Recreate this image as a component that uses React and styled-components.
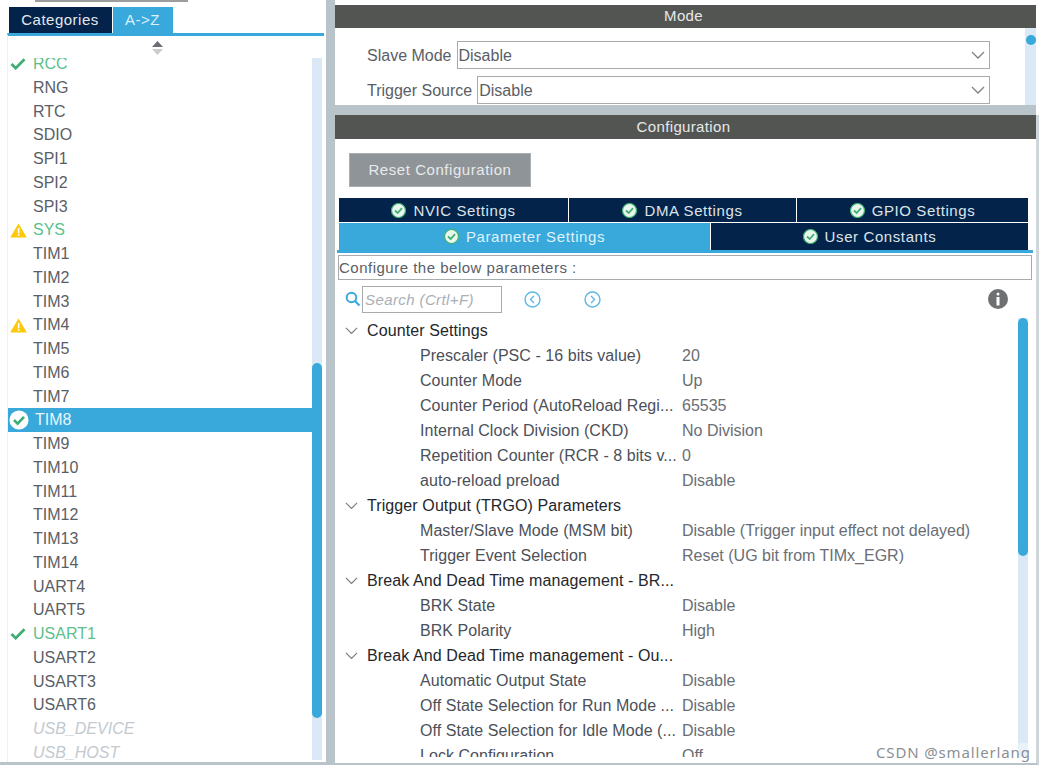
import styled, { createGlobalStyle } from 'styled-components'

const GlobalStyle = createGlobalStyle`
	html, body { margin: 0; padding: 0; background: #fff; }
	body { font-family: "Liberation Sans", Arial, sans-serif; overflow: hidden; }
	* { box-sizing: border-box; }
`

const Page = styled.div`
	display: flex;
	width: 1039px;
	height: 771px;
	overflow: hidden;
`

const LeftPane = styled.aside`
	width: 326px;
	height: 765px;
	padding-left: 7px;
	display: flex;
	flex-direction: column;
	border-bottom: 3px solid #b9c4ca;
`

const TopRule = styled.div`
	height: 2px;
	margin-left: 28px;
	width: 153px;
	background: #9b9e9f;
`

const TabBar = styled.div`
	display: flex;
	height: 31px;
	padding: 5px 0 0 2px;
	gap: 1px;
`

const SideTab = styled.div`
	width: ${(p) => p.$w}px;
	height: 26px;
	background: ${(p) => (p.$active ? '#39a9dc' : '#03234b')};
	color: ${(p) => (p.$active ? '#dcf0fa' : '#e4e8ec')};
	font-size: 15px;
	letter-spacing: 0.5px;
	line-height: 26px;
	text-align: center;
	padding-right: 1px;
`

const ListFrame = styled.div`
	flex: 1;
	min-height: 0;
	margin-right: 2px;
	border-top: 3px solid #39a9dc;
	border-left: 1px solid #eef1f3;
	display: flex;
	flex-direction: column;
`

const SortHandle = styled.div`
	height: 22px;
	display: flex;
	justify-content: center;
	padding: 5px 18px 0 0;
	flex: none;
`

const ListBody = styled.div`
	flex: 1;
	min-height: 0;
	display: flex;
	overflow: hidden;
	margin-bottom: 2px;
`

const Rows = styled.div`
	flex: 1;
	min-width: 0;
	margin-top: -6px;
`

const PeriphRow = styled.div`
	height: 23.75px;
	display: flex;
	align-items: center;
	font-size: 16px;
	line-height: 23.75px;
	font-style: ${(p) => (p.$off ? 'italic' : 'normal')};
	color: ${(p) => (p.$sel ? '#e8f5fb' : p.$off ? '#c3c9cf' : p.$ok ? '#5dbf8c' : '#5a5e66')};
	background: ${(p) => (p.$sel ? '#39a9dc' : 'transparent')};
	margin-right: ${(p) => (p.$sel ? '-10px' : '0')};
`

const RowIcon = styled.span`
	width: ${(p) => (p.$sel ? 27 : 25)}px;
	height: 23px;
	flex: none;
	display: flex;
	align-items: center;
	padding-left: ${(p) => (p.$sel ? 1 : 2)}px;
`

const ScrollTrack = styled.div`
	width: ${(p) => p.$w || 10}px;
	flex: none;
	background: #dbe8f5;
	margin-right: ${(p) => p.$mr || 0}px;
`

const ScrollThumb = styled.div`
	width: 100%;
	background: #39a9dc;
	border-radius: 5px;
`

const Gutter = styled.div`
	width: 9px;
	height: 765px;
	background: #b9c4ca;
	flex: none;
`

const RightPane = styled.main`
	width: 704px;
	height: 765px;
	flex: none;
	display: flex;
	flex-direction: column;
	padding-top: 5px;
`

const PanelHead = styled.div`
	height: ${(p) => p.$h}px;
	flex: none;
	background: #535553;
	color: #e8e8e8;
	font-size: 15px;
	line-height: ${(p) => p.$lh}px;
	text-align: center;
	letter-spacing: 0.35px;
	padding-right: 4px;
`

const ModePanel = styled.section`
	height: 100px;
	flex: none;
	margin-right: 3px;
	display: flex;
	flex-direction: column;
`

const ModeBody = styled.div`
	flex: 1;
	min-height: 0;
	background: #fff;
	display: flex;
	overflow: hidden;
`

const ModeFields = styled.div`
	flex: 1;
	padding: 13px 0 0 32px;
	display: flex;
	flex-direction: column;
	gap: 7px;
`

const Field = styled.div`
	display: flex;
	align-items: center;
	margin-right: 35px;
	gap: 5px;
`

const FieldLabel = styled.span`
	font-size: 16px;
	color: #5a5e66;
	white-space: nowrap;
	padding-top: 1px;
`

const Select = styled.div`
	flex: 1;
	height: 28px;
	border: 1px solid #a6abae;
	padding: 1px 4px 0 1px;
	display: flex;
	align-items: center;
	justify-content: space-between;
	font-size: 16px;
	color: #5a5e66;
`

const ModeKnobTrack = styled.div`
	width: 11px;
	flex: none;
	background: #dbe8f5;
	padding-top: 7px;
	display: flex;
	justify-content: center;
	align-items: flex-start;
`

const Knob = styled.div`
	width: 10px;
	height: 10px;
	border-radius: 50%;
	background: #39a9dc;
`

const PanelGap = styled.div`
	height: 10px;
	flex: none;
	margin-right: 3px;
	background: #b9c4ca;
`

const ConfigPanel = styled.section`
	flex: 1;
	min-height: 0;
	display: flex;
	flex-direction: column;
	border-right: 3px solid #cfd6da;
	border-bottom: 2px solid #b9c4ca;
`

const ConfigBody = styled.div`
	flex: 1;
	min-height: 0;
	background: #fff;
	display: flex;
	flex-direction: column;
	padding: 14px 0 6px;
`

const ResetButton = styled.div`
	width: 182px;
	height: 34px;
	margin-left: 14px;
	background: #8f9498;
	border: 1px solid #a9adb0;
	color: #e8eaeb;
	font-size: 15px;
	letter-spacing: 0.55px;
	line-height: 32px;
	text-align: center;
	flex: none;
`

const TabRow = styled.div`
	display: flex;
	margin: ${(p) => p.$mt || 0}px 8px 0 4px;
	gap: 1px;
	height: ${(p) => p.$h}px;
	flex: none;
`

const ConfigTab = styled.div`
	width: ${(p) => p.$w}px;
	flex: ${(p) => (p.$w ? 'none' : 1)};
	background: ${(p) => (p.$active ? '#39a9dc' : '#03234b')};
	color: ${(p) => (p.$active ? '#dff2fb' : '#dfe3e8')};
	display: flex;
	align-items: center;
	justify-content: center;
	gap: 7px;
	font-size: 15px;
	letter-spacing: 0.6px;
`

const TabsRule = styled.div`
	height: 3px;
	flex: none;
	margin: 0 3px 0 2px;
	background: #39a9dc;
`

const Hint = styled.div`
	height: 25px;
	flex: none;
	margin: 2px 4px 0 3px;
	border: 1px solid #a6abae;
	font-size: 15px;
	letter-spacing: 0.5px;
	line-height: 23px;
	color: #5a5e66;
`

const SearchBar = styled.div`
	height: 38px;
	flex: none;
	display: flex;
	align-items: center;
	padding: 0 28px 0 10px;
`

const SearchBox = styled.div`
	width: 140px;
	height: 27px;
	margin-left: 1px;
	border: 1px solid #a6abae;
	font-size: 15px;
	font-style: italic;
	letter-spacing: 0.4px;
	color: #a9afb5;
	line-height: 25px;
	padding-left: 2px;
`

const NavIcon = styled.span`
	display: flex;
	margin-left: ${(p) => p.$ml}px;
`

const InfoIcon = styled.span`
	display: flex;
	margin-left: auto;
`

const TreeArea = styled.div`
	flex: 1;
	min-height: 0;
	display: flex;
	overflow: hidden;
`

const Tree = styled.div`
	flex: 1;
	min-width: 0;
	overflow: hidden;
`

const GroupRow = styled.div`
	height: 25px;
	display: flex;
	align-items: center;
	padding-left: 10px;
	gap: 9px;
	font-size: 16px;
	letter-spacing: 0.1px;
	color: #24272c;
`

const ParamRow = styled.div`
	height: 25px;
	display: flex;
	align-items: center;
	padding-left: 85px;
	font-size: 16px;
	white-space: nowrap;
`

const ParamName = styled.span`
	width: 262px;
	flex: none;
	color: #4c5058;
	letter-spacing: 0.05px;
`

const ParamValue = styled.span`
	color: #6a6e74;
`

const TreeTrack = styled(ScrollTrack)`
	margin-right: 8px;
`

const Watermark = styled.div`
	position: absolute;
	left: 876px;
	top: 743px;
	font-size: 15px;
	line-height: 18px;
	color: #8b8f94;
	letter-spacing: 0.85px;
	font-family: "Noto Sans", sans-serif;
	background: rgba(255, 255, 255, 0.4);
`

const Check = () => <svg width="16" height="13" viewBox="0 0 17 14">
	<path d="M1.5 7.5 L6 12 L15.5 2.5" fill="none" stroke="#3fae74" strokeWidth="3" />
</svg>

const Warn = () => <svg width="17" height="15" viewBox="0 0 17 15">
	<path d="M8.5 .5 L16.8 14.6 H.2 Z" fill="#fdc90a" strokeLinejoin="round" />
	<rect x="7.8" y="5" width="1.6" height="5.4" fill="#fff" />
	<rect x="7.8" y="11.2" width="1.6" height="1.7" fill="#fff" />
</svg>

const SelCheck = () => <svg width="20" height="20" viewBox="0 0 22 22">
	<circle cx="11" cy="11" r="10.5" fill="#fff" />
	<path d="M5.5 11 L9.5 15 L16.5 7.5" fill="none" stroke="#3fae74" strokeWidth="3" />
</svg>

const TabCheck = () => <svg width="15" height="15" viewBox="0 0 15 15">
	<circle cx="7.5" cy="7.5" r="7" fill="#e9f6ee" stroke="#3fae74" strokeWidth="1.2" />
	<path d="M4 7.5 L6.7 10 L11 5.2" fill="none" stroke="#3fae74" strokeWidth="1.8" />
</svg>

const Chevron = ({ color = '#7b8086', size = 14 }) => <svg width={size} height={size * 0.6} viewBox="0 0 14 8.4">
	<path d="M1 1 L7 7 L13 1" fill="none" stroke={color} strokeWidth="1.3" />
</svg>

const SortArrows = () => <svg width="11" height="14" viewBox="0 0 11 14">
	<path d="M5.5 0 L11 6 H0 Z" fill="#6b6f73" />
	<path d="M5.5 14 L11 8 H0 Z" fill="#c9cdd0" />
</svg>

const SearchIcon = () => <svg width="16" height="16" viewBox="0 0 16 16">
	<circle cx="6.5" cy="6.5" r="4.8" fill="none" stroke="#39a9dc" strokeWidth="2" />
	<path d="M10 10 L14.5 14.5" stroke="#39a9dc" strokeWidth="2.2" />
</svg>

const CircleArrow = ({ dir }) => <svg width="17" height="17" viewBox="0 0 17 17">
	<circle cx="8.5" cy="8.5" r="7.5" fill="none" stroke="#5cb8e4" strokeWidth="1.4" />
	<path d={dir === 'left' ? 'M10 5 L6.5 8.5 L10 12' : 'M7 5 L10.5 8.5 L7 12'} fill="none" stroke="#5cb8e4" strokeWidth="1.4" />
</svg>

const Info = () => <svg width="20" height="20" viewBox="0 0 20 20">
	<circle cx="10" cy="10" r="10" fill="#6f7072" />
	<rect x="8.5" y="3.5" width="3" height="3" rx="1.5" fill="#fff" />
	<rect x="8.5" y="8" width="3" height="8.5" fill="#fff" />
</svg>

const peripherals = [
	{ name: 'RCC', ok: true, icon: 'check' }, { name: 'RNG' }, { name: 'RTC' }, { name: 'SDIO' },
	{ name: 'SPI1' }, { name: 'SPI2' }, { name: 'SPI3' }, { name: 'SYS', ok: true, icon: 'warn' },
	{ name: 'TIM1' }, { name: 'TIM2' }, { name: 'TIM3' }, { name: 'TIM4', icon: 'warn' },
	{ name: 'TIM5' }, { name: 'TIM6' }, { name: 'TIM7' }, { name: 'TIM8', sel: true, icon: 'sel' },
	{ name: 'TIM9' }, { name: 'TIM10' }, { name: 'TIM11' }, { name: 'TIM12' }, { name: 'TIM13' },
	{ name: 'TIM14' }, { name: 'UART4' }, { name: 'UART5' }, { name: 'USART1', ok: true, icon: 'check' },
	{ name: 'USART2' }, { name: 'USART3' }, { name: 'USART6' },
	{ name: 'USB_DEVICE', off: true }, { name: 'USB_HOST', off: true }
]

const icons = { check: <Check />, warn: <Warn />, sel: <SelCheck /> }

const params = [
	{ group: 'Counter Settings' },
	['Prescaler (PSC - 16 bits value)', '20'],
	['Counter Mode', 'Up'],
	['Counter Period (AutoReload Regi...', '65535'],
	['Internal Clock Division (CKD)', 'No Division'],
	['Repetition Counter (RCR - 8 bits v...', '0'],
	['auto-reload preload', 'Disable'],
	{ group: 'Trigger Output (TRGO) Parameters' },
	['Master/Slave Mode (MSM bit)', 'Disable (Trigger input effect not delayed)'],
	['Trigger Event Selection', 'Reset (UG bit from TIMx_EGR)'],
	{ group: 'Break And Dead Time management - BR...' },
	['BRK State', 'Disable'],
	['BRK Polarity', 'High'],
	{ group: 'Break And Dead Time management - Ou...' },
	['Automatic Output State', 'Disable'],
	['Off State Selection for Run Mode ...', 'Disable'],
	['Off State Selection for Idle Mode (...', 'Disable'],
	['Lock Configuration', 'Off']
]

export default function App() {
	return <Page>
		<GlobalStyle />
		<LeftPane>
			<TopRule />
			<TabBar>
				<SideTab $w={103}>Categories</SideTab>
				<SideTab $w={60} $active>A-&gt;Z</SideTab>
			</TabBar>
			<ListFrame>
				<SortHandle><SortArrows /></SortHandle>
				<ListBody>
					<Rows>
						{peripherals.map((p) => <PeriphRow key={p.name} $ok={p.ok} $off={p.off} $sel={p.sel}>
							<RowIcon $sel={p.sel}>{icons[p.icon]}</RowIcon>
							{p.name}
						</PeriphRow>)}
					</Rows>
					<ScrollTrack $mr={2}>
						<ScrollThumb style={{ height: 355, marginTop: 305 }} />
					</ScrollTrack>
				</ListBody>
			</ListFrame>
		</LeftPane>
		<Gutter />
		<RightPane>
			<ModePanel>
				<PanelHead $h={23} $lh={22}>Mode</PanelHead>
				<ModeBody>
					<ModeFields>
						<Field>
							<FieldLabel>Slave Mode</FieldLabel>
							<Select>Disable<Chevron /></Select>
						</Field>
						<Field>
							<FieldLabel>Trigger Source</FieldLabel>
							<Select>Disable<Chevron /></Select>
						</Field>
					</ModeFields>
					<ModeKnobTrack><Knob /></ModeKnobTrack>
				</ModeBody>
			</ModePanel>
			<PanelGap />
			<ConfigPanel>
				<PanelHead $h={24} $lh={24}>Configuration</PanelHead>
				<ConfigBody>
					<ResetButton>Reset Configuration</ResetButton>
					<TabRow $mt={11} $h={24}>
						<ConfigTab $w={229}><TabCheck />NVIC Settings</ConfigTab>
						<ConfigTab $w={227}><TabCheck />DMA Settings</ConfigTab>
						<ConfigTab><TabCheck />GPIO Settings</ConfigTab>
					</TabRow>
					<TabRow $mt={1} $h={27}>
						<ConfigTab $w={371} $active><TabCheck />Parameter Settings</ConfigTab>
						<ConfigTab><TabCheck />User Constants</ConfigTab>
					</TabRow>
					<TabsRule />
					<Hint>Configure the below parameters :</Hint>
					<SearchBar>
						<SearchIcon />
						<SearchBox>Search (Crtl+F)</SearchBox>
						<NavIcon $ml={22}><CircleArrow dir="left" /></NavIcon>
						<NavIcon $ml={43}><CircleArrow dir="right" /></NavIcon>
						<InfoIcon><Info /></InfoIcon>
					</SearchBar>
					<TreeArea>
						<Tree>
							{params.map((row, i) => row.group
								? <GroupRow key={i}><Chevron size={13} />{row.group}</GroupRow>
								: <ParamRow key={i}>
									<ParamName>{row[0]}</ParamName>
									<ParamValue>{row[1]}</ParamValue>
								</ParamRow>)}
						</Tree>
						<TreeTrack>
							<ScrollThumb style={{ height: 238 }} />
						</TreeTrack>
					</TreeArea>
				</ConfigBody>
			</ConfigPanel>
		</RightPane>
		<Watermark>CSDN @smallerlang</Watermark>
	</Page>
}
